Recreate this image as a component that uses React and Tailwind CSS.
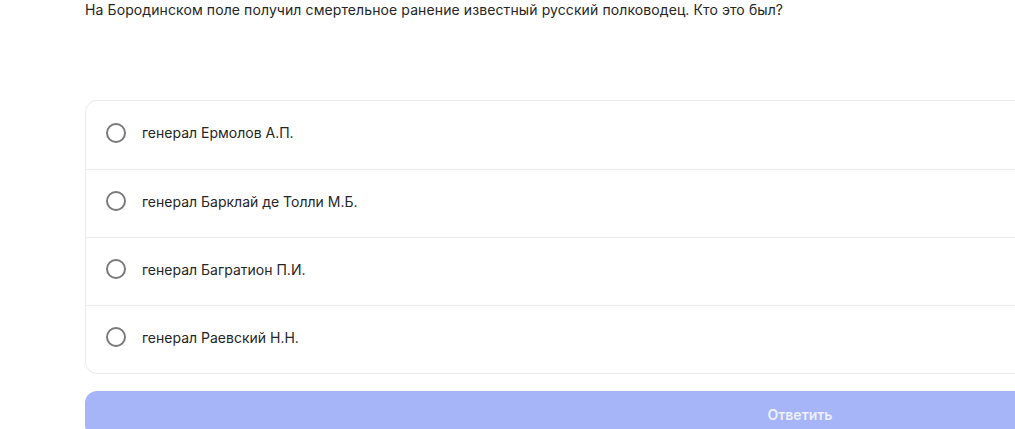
import React, { useState } from "react";

const answers = [
  "генерал Ермолов А.П.",
  "генерал Барклай де Толли М.Б.",
  "генерал Багратион П.И.",
  "генерал Раевский Н.Н.",
];

export default function App() {
  const [picked, setPicked] = useState(null);

  return (
    <div
      className="h-[429px] w-full overflow-hidden bg-white pl-[85px]"
      style={{ fontFamily: "Inter, 'Noto Sans', sans-serif" }}
    >
      <div className="w-[1430px]">
        <p className="pt-px text-[14px] leading-[17px] tracking-[0.1px] text-[#262626]">
          На Бородинском поле получил смертельное ранение известный русский полководец. Кто это был?
        </p>

        {/* answer list */}
        <div className="mt-[82px] rounded-xl border border-[#ebebeb] bg-white">
          {answers.map((a, i) => (
            <label
              key={i}
              className={
                "flex h-[68px] cursor-pointer items-center gap-4 px-5 pb-[5px] " +
                (i > 0 ? "border-t border-[#ececec]" : "")
              }
              onClick={() => setPicked(i)}
            >
              <span
                className={
                  "h-5 w-5 shrink-0 rounded-full border-2 " +
                  (picked === i ? "border-[#6d7cf5] bg-[#6d7cf5]" : "border-[#7a7a7a]")
                }
              />
              <span className="text-[14px] text-[#262626]">{a}</span>
            </label>
          ))}
        </div>

        <button
          className="mt-[17px] h-[46px] w-full rounded-xl bg-[#a5b5f8] text-[14px] font-semibold text-white/80"
          disabled={picked === null}
        >
          Ответить
        </button>
      </div>
    </div>
  );
}
